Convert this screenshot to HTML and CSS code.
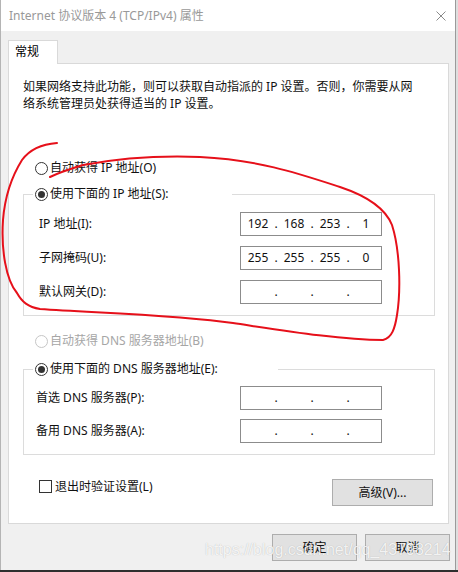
FILE: index.html
```html
<!DOCTYPE html>
<html lang="zh-CN">
<head>
<meta charset="utf-8">
<title>Internet 协议版本 4 (TCP/IPv4) 属性</title>
<link rel="stylesheet" href="styles.css">
</head>
<body>
<div class="screen">
  <div class="window">
    <div class="titlebar">
      <span class="title">Internet 协议版本 4 (TCP/IPv4) 属性</span>
      <svg class="close" width="10" height="10" viewBox="0 0 10 10"><path d="M0.5 0.5 L9.5 9.5 M9.5 0.5 L0.5 9.5" stroke="#8a8a8a" stroke-width="1" fill="none"/></svg>
    </div>
    <div class="dialog-body">
      <div class="tabs"><div class="tab">常规</div></div>
      <div class="panel">
        <p class="desc">如果网络支持此功能，则可以获取自动指派的 IP 设置。否则，你需要从网<br>络系统管理员处获得适当的 IP 设置。</p>
        <div class="radio radio-top"><span class="dot"></span><span>自动获得 IP 地址(O)</span></div>
        <fieldset class="group group-ip">
          <legend class="legend legend-ip"><span class="radio"><span class="dot checked"></span><span>使用下面的 IP 地址(S):</span></span></legend>
          <div class="row"><span class="lbl">IP 地址(I):</span>
            <div class="ip"><span>192</span><span>.</span><span>168</span><span>.</span><span>253</span><span>.</span><span>1</span></div></div>
          <div class="row"><span class="lbl">子网掩码(U):</span>
            <div class="ip"><span>255</span><span>.</span><span>255</span><span>.</span><span>255</span><span>.</span><span>0</span></div></div>
          <div class="row"><span class="lbl">默认网关(D):</span>
            <div class="ip ip-empty"><span></span><span>.</span><span></span><span>.</span><span></span><span>.</span><span></span></div></div>
        </fieldset>
        <div class="radio radio-disabled"><span class="dot"></span><span>自动获得 DNS 服务器地址(B)</span></div>
        <fieldset class="group group-dns">
          <legend class="legend legend-dns"><span class="radio"><span class="dot checked"></span><span>使用下面的 DNS 服务器地址(E):</span></span></legend>
          <div class="row"><span class="lbl">首选 DNS 服务器(P):</span>
            <div class="ip ip-empty"><span></span><span>.</span><span></span><span>.</span><span></span><span>.</span><span></span></div></div>
          <div class="row"><span class="lbl">备用 DNS 服务器(A):</span>
            <div class="ip ip-empty"><span></span><span>.</span><span></span><span>.</span><span></span><span>.</span><span></span></div></div>
        </fieldset>
        <div class="footer-row">
          <div class="check"><span class="box"></span><span>退出时验证设置(L)</span></div>
          <div class="btn btn-adv">高级(V)...</div>
        </div>
      </div>
      <div class="buttons">
        <div class="btn btn-main">确定</div>
        <div class="btn btn-main">取消</div>
      </div>
    </div>
  </div>
  <div class="edge"></div>
</div>
<svg class="annot" width="458" height="572" viewBox="0 0 458 572">
  <path d="M57,143 C44,144 30,149 22,160 C12,176 5,195 3,220 C1,250 6,280 17,293 C22,302 28,307 40,309 C100,313 180,315 233,323 C280,330 340,340 383,340 C392,338 395,328 397,315 C401,290 400,250 392,225 C386,210 370,197 340,187 C300,174 260,160 200,157 C150,155 110,160 83,165 C70,169 58,173 50,177" fill="none" stroke="#e6101a" stroke-width="2" stroke-linecap="round"/>
</svg>
<div class="watermark">https://blog.csdn.net/qq_43798214</div>
</body>
</html>
```
FILE: styles.css
```css
* { box-sizing: border-box; }
html, body { margin: 0; padding: 0; }
body {
  width: 458px;
  height: 572px;
  overflow: hidden;
  position: relative;
  background: #2e2e2e;
  font-family: "Noto Sans", "Noto Sans CJK SC", sans-serif;
  font-size: 12px;
  color: #111;
}
.screen { display: flex; height: 570px; background: #dcdcdc; }
.window {
  width: 456px;
  height: 570px;
  border-left: 1px solid #b4b4b4;
  border-right: 1px solid #9a9a9a;
  background: #f0f0f0;
  display: flex;
  flex-direction: column;
}
.edge { flex: 1; background: #dedede; }

.titlebar {
  height: 31px;
  background: #fff;
  display: flex;
  align-items: center;
  justify-content: space-between;
  padding: 0 9px 0 8px;
}
.title { color: #999; line-height: 16px; }
.close { display: block; }

.dialog-body { flex: 1; padding: 9px 0 0 7px; display: flex; flex-direction: column; }
.tabs { display: flex; height: 24px; margin-bottom: -1px; }
.tab {
  position: relative;
  z-index: 1;
  width: 50px;
  height: 24px;
  background: #fff;
  border: 1px solid #d9d9d9;
  border-bottom: none;
  padding: 3px 0 0 6px;
  line-height: 16px;
  color: #000;
}
.panel {
  width: 441px;
  height: 461px;
  background: #fff;
  border: 1px solid #d9d9d9;
  padding: 14px 13px 0 14px;
}
.desc { margin: 0; line-height: 17px; }

.radio { display: flex; align-items: center; height: 16px; line-height: 16px; gap: 2px; white-space: nowrap; }
.dot {
  width: 13px; height: 13px;
  border: 1px solid #333;
  border-radius: 50%;
  background: #fff;
  display: flex; align-items: center; justify-content: center;
  flex: none;
}
.dot.checked::after { content: ""; width: 7px; height: 7px; border-radius: 50%; background: #333; }
.radio-top { margin: 48px 0 0 12px; }
.radio-disabled { margin: 17px 0 0 12px; color: #a6a6a6; }
.radio-disabled .dot { border-color: #c6c6c6; }

.group {
  margin: 10px 0 0 0;
  border: 1px solid #dcdcdc;
  min-width: 0;
}
.group-ip { padding: 10px 0 11px 15px; }
.group-dns { margin-top: 12px; padding: 9px 0 11px 12px; }
.legend { padding: 0 0 0 2px; height: 16px; background: #fff; }
.legend-ip { width: 199px; margin-left: -6px; }
.legend-dns { width: 245px; margin-left: -3px; }
.group-dns .row + .row { margin-top: 9px; }
.group-ip .row + .row { margin-top: 10px; }
.row { display: flex; align-items: center; justify-content: space-between; height: 24px; padding-right: 52px; }
.lbl { line-height: 16px; }
.ip {
  width: 142px;
  height: 24px;
  border: 1px solid #8c8c8c;
  padding: 0 1px;
  display: grid;
  grid-template-columns: 32px 4px 32px 4px 32px 4px 32px;
  line-height: 22px;
  text-align: center;
  color: #111;
}

.footer-row { margin-top: 24px; height: 27px; display: flex; align-items: center; justify-content: space-between; padding-left: 16px; padding-right: 2px; }
.check { display: flex; align-items: center; gap: 3px; line-height: 16px; margin-top: -12px; }
.box { width: 13px; height: 13px; border: 1px solid #333; background: #fff; }
.btn {
  height: 27px;
  background: #e1e1e1;
  border: 1px solid #adadad;
  display: flex; align-items: center; justify-content: center;
  line-height: 16px;
  color: #111;
}
.btn-adv { width: 101px; }
.buttons { margin-top: 10px; display: flex; justify-content: flex-end; gap: 8px; padding-right: 5px; }
.btn-main { width: 85px; }

.annot { position: absolute; left: 0; top: 0; pointer-events: none; }
.watermark {
  position: absolute;
  left: 205px;
  top: 541px;
  font-family: "Liberation Sans", Arial, sans-serif;
  font-size: 16px;
  line-height: 18px;
  color: rgba(255, 255, 255, 0.85);
  text-shadow: 0 0 1px rgba(0, 0, 0, 0.25);
  white-space: nowrap;
}
```
